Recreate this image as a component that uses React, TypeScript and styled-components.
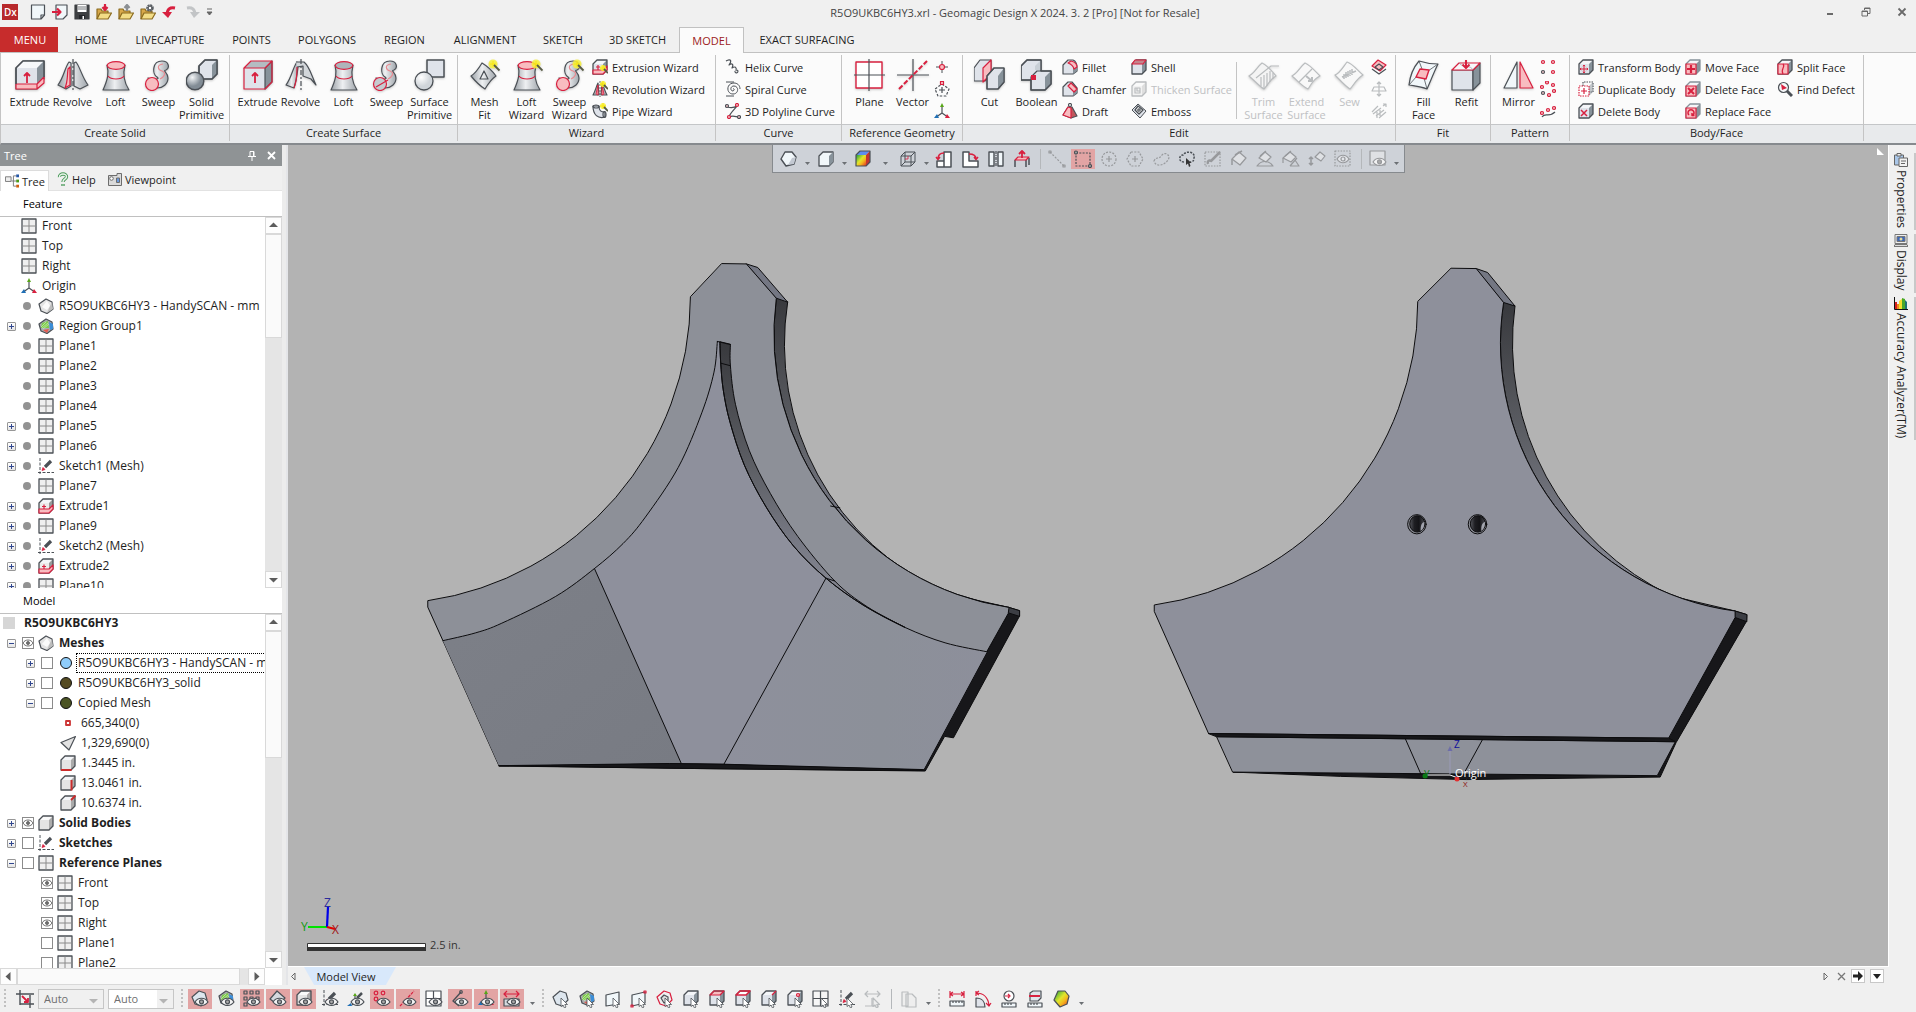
import React, { ReactNode } from "react";
import styled, { createGlobalStyle, css } from "styled-components";

/* ---------- palette ---------- */
const LINE = "#4b5056";
const RED = "#d8203f";
const PINK = "#f8bcc0";
const LIGHT = "#dfe3ea";
const DARK = "#87929a";
const PALE = "#f1f7fa";
const OFF = "#b9bcbe";

const GlobalStyle = createGlobalStyle`
  * { box-sizing: border-box; }
  html, body { margin: 0; height: 100%; }
  #root { height: 100%; }
  body, button, select, input {
    font-family: "Open Sans", "Noto Sans", sans-serif;
    font-size: 11px;
    color: #1e1e1e;
  }
  button { border: 0; background: none; padding: 0; margin: 0; }
  svg { display: block; flex: none; }
`;

/* ---------- icon drawings ---------- */
const B = ({ children }: { children: ReactNode }) => (
  <svg width="32" height="32" viewBox="1 0 32 32" fill="none" stroke={LINE} strokeWidth="1.2" strokeLinejoin="round">
    {children}
  </svg>
);
const S = ({ children, c = LINE }: { children: ReactNode; c?: string }) => (
  <svg width="16" height="16" viewBox="0 0 16 16" fill="none" stroke={c} strokeWidth="1.2" strokeLinejoin="round">
    {children}
  </svg>
);

/* small cube with configurable faces */
const Cube = ({ front = LIGHT, top = "#f4f6f9", side = DARK, line = LINE }: { front?: string; top?: string; side?: string; line?: string }) => (
  <g stroke="none">
    <path d="M1 5L5 1H15L11 5Z" fill={top} />
    <path d="M11 5L15 1V11L11 15Z" fill={side} />
    <path d="M1 5H11V15H1Z" fill={front} />
    <path d="M1 5L5 1H15V11L11 15H1Z" fill="none" stroke={line} strokeWidth="1.3" />
  </g>
);
const Wand = ({ x, y, r = 4.5 }: { x: number; y: number; r?: number }) => (
  <g transform={`translate(${x} ${y})`}>
    <circle cx="0" cy="0" r={r} fill="#f6f03a" stroke="none" opacity=".85" />
    <path d="M0 -3V3M-3 0H3" stroke="#fbe600" strokeWidth=".8" />
    <path d={`M1 1L${r + 2} ${r + 2}`} stroke="#565a44" strokeWidth="1.8" />
  </g>
);
const Plus4 = ({ c = RED }: { c?: string }) => (
  <path d="M6 6V14M2 10H10M5 7.2L6 6L7 7.2M5 12.8L6 14L7 12.8M3.2 9L2 10L3.2 11M8.8 9L10 10L8.8 11" stroke={c} strokeWidth="1" />
);
const SCurve = (
  <>
    <path d="M15 18C10 15 10 2 20 2C27 2 28 9 24 11C20 12 26 13 26 19C26 25 21 29 15 29L6 19C10 21 19 21 15 18Z" fill="url(#gMetal)" />
    <path d="M21 5C14 6 16 11 20 12C25 14 22 18 18 20" stroke="#e88b92" />
  </>
);
const Vase = (top: string) => (
  <>
    <path d="M8 6C10 14 9 20 4 31H30C24 22 24 14 26 6Z" fill="url(#gMetal)" />
    <ellipse cx="17" cy="6.500" rx="8.800" ry="3.800" fill={top} stroke={RED} />
    <path d="M9 17c3 4 13 4 16 0" stroke={RED} />
  </>
);

const big: Record<string, ReactNode> = {
  extrudeSolid: <><path d="M3 9L10 2H31V20L24 30H3Z" fill={LIGHT} /><path d="M3 9L10 2H31L24 9Z" fill="#f6f8fa" stroke="none" /><path d="M24 9L31 2V18L24 25Z" fill={DARK} stroke="none" /><path d="M3 25H24L31 18V24L24 30H3ZM24 25V30" fill={PINK} stroke={RED} /><path d="M3 25V9L10 2H31V18" strokeWidth="1.5" /><path d="M14 24V14M11 17L14 14L17 17" stroke={RED} strokeWidth="1.8" /></>,
  revolveSolid: <><path d="M13 3C9 8 8 18 2 26l8 4 5-3V4ZM20 3C24 8 26 18 32 26l-8 4-6-3V4Z" fill="url(#gMetal)" /><path d="M12 10L14 8V26L9 29C12 22 11 17 12 10Z" fill={PINK} stroke={RED} /><path d="M17 0V32" strokeDasharray="5 2 2 2" /></>,
  loftSolid: Vase(PINK),
  sweepSolid: <>{SCurve}<circle cx="10" cy="25" r="6.500" fill={PINK} stroke={RED} /></>,
  solidPrimitive: <><path d="M14 7L20 1H32V15L27 20H14Z" fill={LIGHT} /><path d="M27 6L32 1V15L27 20Z" fill={DARK} stroke="none" /><path d="M14 7L20 1H32V15L27 20H14Z" strokeWidth="1.5" /><circle cx="10" cy="22" r="8.800" fill="url(#gBall)" strokeWidth="1.5" /></>,
  extrudeSurf: <><path d="M3 9H24V30H3Z" fill={LIGHT} stroke="none" /><path d="M24 9L31 2V23L24 30Z" fill={DARK} /><path d="M3 9L10 2H31L24 9Z" fill="#b4bcc2" stroke={RED} /><path d="M3 9V30H24L31 23V2" stroke={RED} /><path d="M14 24V14M11 17L14 14L17 17" stroke={RED} strokeWidth="1.8" /></>,
  revolveSurf: <><path d="M13 3C9 8 8 18 2 26l8 3C13 20 13 16 14 8Z" fill="url(#gMetal)" /><path d="M12 3H20C26 8 28 18 32 26L27 20 19 17V7L13 8" fill="#d2d6da" /><path d="M13 8C13 16 13 22 10 29" stroke={RED} /><path d="M17 0V32" strokeDasharray="5 2 2 2" /></>,
  loftSurf: Vase("#aeb4ba"),
  sweepSurf: <>{SCurve}<circle cx="10" cy="25" r="6.500" fill="#c6cbd0" stroke={RED} /><path d="M6 28L18 21" stroke={RED} /></>,
  surfacePrimitive: <><path d="M14 1H31V18H14Z" fill={LIGHT} strokeWidth="1.5" /><circle cx="11" cy="22" r="9" fill="url(#gPale)" strokeWidth="1.3" /></>,
  meshFit: <><path d="M3 17C8 14 11 9 14 4C19 7 23 10 28 17C23 20 20 25 17 30C12 27 8 23 3 17Z" fill="url(#gMetal)" /><path d="M16 12L20 20H12Z" /><Wand x={25} y={5} /></>,
  loftWiz: <>{Vase(PINK)}<Wand x={26} y={5} /></>,
  sweepWiz: <>{SCurve}<circle cx="10" cy="25" r="6.500" fill={PINK} stroke={RED} /><Wand x={24} y={5} /></>,
  plane: <><path d="M3 3H29V29H3Z" fill="#fff" stroke={RED} strokeWidth="1.4" /><path d="M16 0V32M0 16H32" strokeWidth="1.2" /></>,
  vector: <><path d="M17 0V32M1 16H33" /><path d="M3 30L31 2" stroke={RED} strokeWidth="2" strokeDasharray="5 2" /></>,
  cut: <><path d="M1 9L7 1H18V15L12 22H1Z" fill={LIGHT} /><path d="M10 9L18 1V15L10 23Z" fill={PINK} stroke={RED} /><path d="M14 17L21 9H31V23L25 30H14Z" fill={LIGHT} /><path d="M25 17L31 9V23L25 30Z" fill={DARK} stroke="none" /><path d="M14 17L21 9H31V23L25 30H14Z" /></>,
  boolean: <><path d="M1 7L7 1H21V14L15 21H1Z" fill={LIGHT} /><path d="M15 7L21 1V11H15Z" fill="#c8cfd6" stroke="none" /><path d="M11 18L17 12H31V25L25 31H11Z" fill={LIGHT} /><path d="M25 18L31 12V25L25 31Z" fill={DARK} stroke="none" /><path d="M11 21H1V7L7 1H21V12H31V25L25 31H11V21" strokeWidth="1.4" /><path d="M11 16H16V21H11Z" fill={RED} stroke="none" /></>,
  trim: <g stroke={OFF}><path d="M2 17C8 14 10 8 15 4C20 6 24 11 29 17C23 20 21 26 17 30C12 27 8 22 2 17Z" fill="#f4f4f4" /><path d="M32 7H24L9 19M14 18V27M17 16V30M20 14V27M23 12V23M26 14V20" /></g>,
  extend: <g stroke={OFF}><path d="M2 17C8 14 10 8 15 4C20 6 24 11 30 17C23 20 21 26 18 30C12 27 8 22 2 17Z" fill="#f8f8f8" /><path d="M9 23L22 10" /><path d="M16 17L22 22M22 18V22H18" strokeWidth="2" /></g>,
  sew: <g stroke={OFF}><path d="M2 16C7 14 10 8 14 3C20 5 24 11 30 16C23 20 21 26 17 30C12 27 8 22 2 16Z" fill="#f8f8f8" /><path d="M11 15V20M13 13V19M15 12V18M17 11V17M19 10V16M9 18L23 12" strokeWidth="1.5" /></g>,
  fillFace: <><path d="M12 2C18 4 24 5 31 5C27 13 24 21 20 30C13 27 8 27 2 26C3 17 6 9 12 2Z" fill={PALE} /><path d="M12 2L15 10M31 5L21 12M20 30L17 19M2 26L10 17" strokeWidth=".8" /><path d="M13 10L22 11L19 20L9 18Z" fill={PINK} stroke={RED} strokeWidth="1.4" /></>,
  refit: <><path d="M2 11H23V31H2Z" fill={LIGHT} /><path d="M23 11L30 4V24L23 31Z" fill={DARK} /><path d="M2 11L9 4H30L23 11Z" fill="#f7f9fb" stroke={RED} /><path d="M9 4C14 10 20 5 23 11" strokeWidth=".6" stroke={DARK} /><path d="M16 1V9M12.500 5.500L16 9L19.500 5.500" stroke={RED} strokeWidth="2" /></>,
  mirror: <><path d="M15 3V29H2Z" fill={PALE} /><path d="M18 3V29H31Z" fill={PINK} stroke={RED} /></>,
};

const dots = (pts: [number, number, string][]) => pts.map(([x, y, c], i) => <circle key={i} cx={x} cy={y} r="1.500" stroke={c} fill="#f4c5c9" />);

const small: Record<string, ReactNode> = {
  extrusionWiz: <><Cube /><path d="M1 11H11L15 7V11L11 15H1Z" fill={PINK} stroke={RED} /><path d="M6 11V6M4 8H8" stroke={RED} /><Wand x={11} y={9} r={3} /></>,
  revolutionWiz: <><path d="M6 2C4 6 3 11 1 14H7ZM10 2C12 6 13 11 15 14H9Z" fill="#b5bcc2" /><path d="M6 4V14L4 13Z" fill={PINK} stroke={RED} strokeWidth=".9" /><path d="M10 5L12 13L10 14Z" fill={PINK} stroke={RED} strokeWidth=".9" /><path d="M8 0V16" strokeDasharray="2 1" strokeWidth=".9" /><Wand x={11} y={3} r={3} /></>,
  pipeWiz: <><path d="M1 3H7C7 8 9 9 13 9V14C6 16 1 12 1 3Z" fill={LIGHT} /><ellipse cx="4" cy="3.500" rx="3" ry="1.500" /><ellipse cx="12.500" cy="11.500" rx="1.500" ry="3" /><Wand x={11} y={3} r={3} /></>,
  helix: <path d="M1 2C6 -1 7 2 4 6C7 4 9 5 7 9C10 7 12 8 11 12M10 12a1.500 1.500 0 1 0 2-1" />,
  spiral: <path d="M8 8c1-1 2 1 0 2-3 0-3-5 1-5 5 0 5 8-1 8-7 0-7-11 1-11 3 0 6 2 6 6M1 1H9M1 15H9" strokeWidth="1" />,
  poly: <><path d="M2 4C6 5 9 5 12 3C10 6 5 10 4 14C8 12 11 14 14 14" />{dots([[2, 3, LINE], [12, 2, RED], [4, 14, RED], [14, 14, LINE]])}</>,
  point: <><path d="M8 2V14M2 8H14" strokeWidth="1" /><circle cx="8" cy="8" r="2.500" fill={PINK} stroke={RED} /></>,
  polygonCenter: <><path d="M8 3L15 8L12 15H4L1 8Z" strokeDasharray="2.500 1.500" /><path d="M8 6V12M5 9H11" /><path d="M6.500 0.500H9.500V3.500H6.500Z" stroke={RED} fill={PINK} /></>,
  axes: <><path d="M8 3V10L3 13.500M8 10L13 13.500" /><path d="M8 0L10 4H6Z" fill="#58a618" stroke="none" /><path d="M0 15L5 15L3 11Z" fill="#1f6fb5" stroke="none" /><path d="M16 15L11 15L13 11Z" fill={RED} stroke="none" /></>,
  fillet: <><path d="M1 6L6 1H11C14 2 15 5 15 9V12L11 15H1Z" fill={LIGHT} /><path d="M11 9L15 7V12L11 15Z" fill={DARK} stroke="none" /><path d="M6 4L9 2C13 3 15 5 15 8L12 10C11 6 9 5 6 4Z" fill={PINK} stroke={RED} /></>,
  chamfer: <><path d="M1 6L6 1H10L15 7V12L11 15H1Z" fill={LIGHT} /><path d="M11 10L15 7V12L11 15Z" fill={DARK} stroke="none" /><path d="M6 5L9 2L15 8L12 11Z" fill={PINK} stroke={RED} /></>,
  draft: <><path d="M6 4L10 4L15 13L9 15L1 12Z" fill="#c0565c" /><path d="M6 4L9 5V15L1 12Z" fill={PINK} stroke={RED} /><circle cx="8" cy="2" r="1.500" /></>,
  shell: <><Cube /><path d="M1 5L4 1H15L12 5Z" fill="#c4848c" stroke={RED} /></>,
  thicken: <g><Cube front="#f2f2f2" top="#fafafa" side="#dedede" line={OFF} /><path d="M4 7H9V12H4ZM6 7V10H9" stroke={OFF} /></g>,
  emboss: <><path d="M1 7L7 1L15 8L9 15Z" fill={LIGHT} strokeWidth="1" /><path d="M7 3L12 7L8 11L4 7Z" fill="#fff" strokeWidth="1.300" /><circle cx="8" cy="7" r="1.200" /></>,
  surfA: <><path d="M1 7L7 1L15 6L9 12Z" fill={PINK} stroke={RED} /><path d="M1 10L8 15L15 10M4 8L8 5L12 8L8 11Z" /></>,
  surfB: <path d="M8 1V15M1 10L3 6H13L15 10ZM6 3L8 1L10 3M6 13L8 15L10 13" stroke={OFF} />,
  surfC: <path d="M1 9L7 3M2 11L10 5M5 13L13 7M8 15L15 9M6 15V9M9 13V7M12 3L15 1M12 1H15V4" stroke={OFF} />,
  pat1: <>{dots([[3, 3, RED], [13, 3, RED], [3, 13, LINE], [13, 13, RED]])}</>,
  pat2: <>{dots([[7, 1.5, RED], [13, 4, RED], [2, 6, RED], [14, 10, RED], [3, 12, LINE], [9, 14, RED]])}</>,
  pat3: <><path d="M2 14C5 9 9 15 15 9" />{dots([[2, 10, RED], [8, 7, RED], [14, 5, RED]])}</>,
  transform: <><Cube /><Plus4 /></>,
  duplicate: <><path d="M5 5V1H15V11H11" strokeDasharray="1.500 1" /><path d="M11 5L15 1V11L11 15Z" fill={DARK} stroke="none" opacity=".5" /><path d="M1 5H11V15H1Z" fill="#fff" stroke={RED} strokeDasharray="1.500 1" /><path d="M6 7V13M3 10H9" stroke={RED} /></>,
  deleteBody: <><Cube /><path d="M3 7L9 13M9 7L3 13" stroke={RED} strokeWidth="1.500" /></>,
  moveFace: <><Cube line={DARK} /><path d="M1 5H11V15H1Z" fill={PINK} stroke={RED} /><path d="M6 6V14M2 10H10" stroke={RED} strokeWidth="2.200" /></>,
  deleteFace: <><Cube line={DARK} /><path d="M1 5H11V15H1Z" fill={PINK} stroke={RED} /><path d="M3 7L9 13M9 7L3 13" stroke={RED} strokeWidth="2" /></>,
  replaceFace: <><Cube line={DARK} /><path d="M1 5H11V15H1Z" fill={PINK} stroke={RED} /><path d="M4 12a3 3 0 1 1 4 0M9.500 12.500L7 12.500V10" stroke={RED} strokeWidth="1.500" /></>,
  splitFace: <><Cube /><path d="M1 5H11V15H1Z" fill={PINK} stroke={RED} /><path d="M6 5C9 8 3 10 6 15" stroke={RED} /></>,
  findDefect: <><path d="M10 10L15 15" strokeWidth="3" /><circle cx="6.500" cy="6.500" r="5" fill="#f4f6f8" /><path d="M4 3L10 7L5 9Z" fill={RED} stroke="none" /></>,
  planeIco: <><path d="M1 1H15V15H1Z" fill="#efefef" strokeWidth="1.300" /><path d="M8 1.500V14.500M1.500 8H14.500" stroke="#8a8a8a" strokeWidth="1" /></>,
  mesh: <><path d="M8 1L14 4L15 11L9 15.500L3 13L1 6Z" fill="#e4e4e4" /><path d="M4 9L9 3L12 8L9 12Z" fill="#fafafa" stroke="none" /><path d="M12 8L14 4L15 11L9 15Z" fill="#bdbdbd" stroke="none" /></>,
  region: <><path d="M8 1L14 4L15 11L9 15.500L3 13L1 6Z" fill="#a9adb0" /><path d="M4 5L10 3L11 10L3 10Z" fill="#7ccb4a" stroke="none" /><path d="M11 4L15 6V11L12 12Z" fill="#3b8ed8" stroke="none" /><path d="M5 12L11 11L9 15Z" fill="#e55a50" stroke="none" /><path d="M3 9L8 4M4 10L10 5M5 11L11 6" stroke="#cdeeb6" strokeWidth=".7" /></>,
  sketch: <><path d="M2 0V16M0 14.500H16" strokeWidth="1" strokeDasharray="3 1.500" /><path d="M7 9L13 3" strokeWidth="3.200" /><path d="M4 12.500L5 9.500L7 11.500Z" fill={RED} stroke={RED} strokeWidth=".8" /></>,
  extrudeTree: <><Cube front="#ececec" side="#9a9a9a" /><path d="M1 11H11L15 7V11L11 15H1Z" fill={PINK} stroke={RED} /><path d="M6 11V6.500M4 8.500H8" stroke={RED} /></>,
  body: <Cube front="#e4e4e4" top="#fafafa" side="#ababab" />,
  vertex: <path d="M6 6H10V10H6Z" stroke="#cc3434" strokeWidth="1.800" fill="#fff" />,
  face: <path d="M1 7.500L15.500 1.500L9 15Z" fill="#e2e2e2" />,
  dimX: <><Cube front="#e4e4e4" side="#ababab" /><path d="M1 15H11.500" stroke="#cc2c2c" strokeWidth="2" /></>,
  dimZ: <><Cube front="#e4e4e4" side="#ababab" /><path d="M11.500 5V15.500" stroke="#cc2c2c" strokeWidth="2" /></>,
  dimY: <><Cube front="#e4e4e4" side="#ababab" /><path d="M11 5L15.500 .5" stroke="#cc2c2c" strokeWidth="2" /></>,
};

const SmallIcon = ({ name }: { name: string }) => <S>{small[name]}</S>;

/* ---------- title bar ---------- */
const Frame = styled.div`
  display: flex;
  flex-direction: column;
  height: 100vh;
  min-width: 1200px;
  background: #f0f0f0;
  overflow: hidden;
`;
const TitleBar = styled.header`
  display: flex;
  height: 27px;
  flex: none;
  align-items: flex-start;
`;
const QuickBar = styled.div`
  display: flex;
  align-items: center;
  gap: 6px;
  padding: 4px 0 0 2px;
`;
const QuickButton = styled.button<{ $gap?: number }>`
  display: flex;
  margin-right: ${(p) => p.$gap ?? 0}px;
`;
const Title = styled.h1`
  flex: 1;
  margin: 0;
  padding-top: 5px;
  font-size: 11px;
  font-weight: 400;
  line-height: 16px;
  text-align: center;
  color: #444;
`;
const WindowButtons = styled.div`
  display: flex;
  gap: 26px;
  padding: 7px 9px 0 8px;
`;
const Glyph = styled.button`
  display: flex;
`;

/* ---------- ribbon tabs ---------- */
const TabRow = styled.nav`
  display: flex;
  height: 26px;
  flex: none;
  border-bottom: 1px solid #c1c1c1;
`;
const MenuButton = styled.button`
  width: 58px;
  margin-right: 2px;
  padding-left: 2px;
  background: #c72c2c;
  color: #fff;
`;
const RibbonTab = styled.button<{ $w: number; $on?: boolean }>`
  width: ${(p) => p.$w}px;
  ${(p) =>
    p.$on &&
    css`
      margin-bottom: -1px;
      border: 1px solid #c1c1c1;
      border-bottom: 0;
      background: #fbfbfb;
      color: #9b1c22;
    `}
`;

/* ---------- ribbon ---------- */
const Ribbon = styled.section`
  display: flex;
  flex: none;
  height: 92px;
  background: linear-gradient(#fbfbfb 71px, #c4c6c8 71px, #c4c6c8 72px, #e8eaec 72px);
  border-left: 1px solid #c4c4c4;
  border-bottom: 2px solid #868a8e;
  padding-top: 2px;
`;
const Group = styled.div<{ $w: number }>`
  display: flex;
  flex-direction: column;
  width: ${(p) => p.$w}px;
  height: 86px;
  border-right: 1px solid #c4c4c4;
`;
const GroupBody = styled.div<{ $pad: number }>`
  display: flex;
  height: 70px;
  padding: 4px 0 0 ${(p) => p.$pad}px;
`;
const GroupLabel = styled.div`
  line-height: 17px;
  text-align: center;
`;
const BigButton = styled.button<{ $w?: number; $off?: boolean }>`
  display: flex;
  flex-direction: column;
  align-items: center;
  width: ${(p) => p.$w ?? 43}px;
  flex: none;
  line-height: 13px;
  white-space: pre;
  color: ${(p) => (p.$off ? "#bfc1c3" : "#1e1e1e")};
  & > svg { margin-bottom: 4px; filter: drop-shadow(0 1px 1px rgba(0, 0, 0, 0.2)); }
`;
const SmallColumn = styled.div<{ $w: number }>`
  display: flex;
  flex-direction: column;
  gap: 6px;
  width: ${(p) => p.$w}px;
  flex: none;
`;
const SmallButton = styled.button<{ $off?: boolean }>`
  display: flex;
  align-items: center;
  gap: 4px;
  height: 16px;
  white-space: nowrap;
  color: ${(p) => (p.$off ? "#bfc1c3" : "#1e1e1e")};
`;
const Rule = styled.div`
  width: 1px;
  height: 57px;
  margin: 3px 5px 0 0;
  background: #c4c4c4;
`;

type BigDef = [string, string, number?, boolean?];
const Bigs = ({ items }: { items: BigDef[] }) => (
  <>
    {items.map(([icon, text, w, off]) => (
      <BigButton key={icon} $w={w} $off={off} disabled={off}>
        <B>{big[icon]}</B>
        {text}
      </BigButton>
    ))}
  </>
);
const Smalls = ({ items, w }: { items: [string, string, boolean?][]; w: number }) => (
  <SmallColumn $w={w}>
    {items.map(([icon, text, off]) => (
      <SmallButton key={icon} $off={off} disabled={off} aria-label={text || icon}>
        <SmallIcon name={icon} />
        {text}
      </SmallButton>
    ))}
  </SmallColumn>
);

/* ---------- main area ---------- */
const Main = styled.main`
  display: flex;
  flex: 1;
  min-height: 0;
`;
const SidePanel = styled.aside`
  display: flex;
  flex-direction: column;
  width: 282px;
  flex: none;
  background: #fff;
`;
const PanelHead = styled.div`
  display: flex;
  align-items: center;
  gap: 11px;
  height: 21px;
  flex: none;
  padding: 0 6px 0 4px;
  background: #8f9395;
  color: #fff;
  & > span { flex: 1; }
`;
const PanelTabs = styled.div`
  display: flex;
  align-items: flex-end;
  height: 25px;
  flex: none;
  background: #f0f0f0;
  border-bottom: 1px solid #e2e2e2;
`;
const PanelTab = styled.button<{ $w: number; $on?: boolean }>`
  display: flex;
  align-items: center;
  gap: 3px;
  width: ${(p) => p.$w}px;
  height: 21px;
  padding-left: 8px;
  ${(p) =>
    p.$on &&
    css`
      height: 21px;
      margin-bottom: -1px;
      background: #fff;
      border: 1px solid #dcdcdc;
      border-bottom: 0;
      padding-left: 4px;
    `}
`;
const SectionHead = styled.h2`
  margin: 0;
  height: 26px;
  flex: none;
  padding-left: 23px;
  border-bottom: 1px solid #c0c0c0;
  font-size: 11px;
  font-weight: 400;
  line-height: 25px;
  color: #000;
`;
const ListArea = styled.div<{ $grow: number }>`
  display: flex;
  flex: ${(p) => p.$grow} 1 0;
  min-height: 0;
`;
const List = styled.ul`
  flex: 1;
  min-width: 0;
  margin: -1px 0 0;
  padding: 0;
  overflow: hidden;
  list-style: none;
`;
const Row = styled.li<{ $indent: number; $bold?: boolean }>`
  display: flex;
  align-items: center;
  height: 20px;
  padding-left: ${(p) => p.$indent}px;
  font-size: 12px;
  font-weight: ${(p) => (p.$bold ? 700 : 400)};
  white-space: nowrap;
  & > * { flex: none; }
`;
const Text = styled.span<{ $focus?: boolean }>`
  margin-left: 4px;
  padding-left: 1px;
  line-height: 18px;
  ${(p) => p.$focus && css`outline: 1px dotted #000;`}
`;
const ExpandCell = styled.span`
  display: flex;
  justify-content: center;
  width: 15px;
`;
const StateCell = styled.span`
  position: relative;
  display: flex;
  width: 19px;
  padding-left: 3px;
  & > svg { position: absolute; top: 1px; left: 4px; pointer-events: none; }
`;
const ExpandButton = styled.button`
  display: flex;
  align-items: center;
  justify-content: center;
  width: 9px;
  height: 9px;
  border: 1px solid #979797;
  border-radius: 1px;
  background: linear-gradient(#fff, #e4e4e4);
`;
const Check = styled.input`
  appearance: none;
  width: 12px;
  height: 12px;
  margin: 0;
  border: 1px solid #8b8b8b;
  background: #fff;
`;
const Bullet = styled.i`
  width: 8px;
  height: 8px;
  margin-left: 1px;
  border-radius: 4px;
  background: #929292;
`;
const ColorDot = styled.i<{ $c: string }>`
  width: 12px;
  height: 12px;
  margin: 0 1px 0 3px;
  border: 1px solid #111;
  border-radius: 6px;
  background: ${(p) => p.$c};
`;
const RootSquare = styled.i`
  width: 12px;
  height: 12px;
  margin-right: 4px;
  background: #d6d6d6;
`;
const Scroll = styled.div<{ $row?: boolean }>`
  display: flex;
  flex-direction: ${(p) => (p.$row ? "row" : "column")};
  flex: ${(p) => (p.$row ? "1" : "none")};
  ${(p) => (p.$row ? "height" : "width")}: 17px;
  background: #e5e5e5;
`;
const ScrollEnd = styled.button`
  display: flex;
  align-items: center;
  justify-content: center;
  width: 17px;
  height: 17px;
  flex: none;
  border: 1px solid #d9d9d9;
  background: #fdfdfd;
`;
const Thumb = styled.div<{ $pct: number }>`
  flex: 0 0 ${(p) => p.$pct}%;
  border: 1px solid #d9d9d9;
  background: #fafafa;
`;
const Spacer = styled.div`
  flex: 1;
`;
const BottomScroll = styled.div`
  display: flex;
  flex: none;
  padding-right: 17px;
`;
const Splitter = styled.div`
  width: 6px;
  flex: none;
  background: #ececec;
  border-right: 2px solid #e4e5e8;
`;

const Expand = ({ open, name }: { open?: boolean; name: string }) => (
  <ExpandButton aria-label={(open ? "Collapse " : "Expand ") + name}>
    <svg width="7" height="7" viewBox="0 0 7 7" stroke="#31478f" strokeWidth="1">
      <path d={open ? "M1 3.500H6" : "M1 3.500H6M3.500 1V6"} />
    </svg>
  </ExpandButton>
);
const EyeCheck = ({ on, name }: { on?: boolean; name: string }) => (
  <>
    <Check type="checkbox" aria-label={"Show " + name} defaultChecked={on} />
    {on && (
      <svg width="10" height="10" viewBox="0 0 10 10" fill="none" stroke="#6c6c6c">
        <path d="M0 5C2 1 8 1 10 5C8 9 2 9 0 5Z" />
        <circle cx="5" cy="5" r="1.500" fill="#6c6c6c" />
      </svg>
    )}
  </>
);

type Feature = [string, string, boolean?, boolean?];
const features: Feature[] = [
  ["planeIco", "Front", true], ["planeIco", "Top", true], ["planeIco", "Right", true], ["axes", "Origin", true],
  ["mesh", "R5O9UKBC6HY3 - HandySCAN - mm"], ["region", "Region Group1", false, true],
  ["planeIco", "Plane1"], ["planeIco", "Plane2"], ["planeIco", "Plane3"], ["planeIco", "Plane4"],
  ["planeIco", "Plane5", false, true], ["planeIco", "Plane6", false, true], ["sketch", "Sketch1 (Mesh)", false, true],
  ["planeIco", "Plane7"], ["extrudeTree", "Extrude1", false, true], ["planeIco", "Plane9", false, true],
  ["sketch", "Sketch2 (Mesh)", false, true], ["extrudeTree", "Extrude2", false, true], ["planeIco", "Plane10", false, true],
];

interface Node { text: string; level: number; icon?: string; dot?: string; exp?: "+" | "-"; state?: "on" | "off"; bold?: boolean; focus?: boolean; }
const nodes: Node[] = [
  { text: "Meshes", level: 0, icon: "mesh", exp: "-", state: "on", bold: true },
  { text: "R5O9UKBC6HY3 - HandySCAN - mm", level: 1, dot: "#8fcdfb", exp: "+", state: "off", focus: true },
  { text: "R5O9UKBC6HY3_solid", level: 1, dot: "#554b22", exp: "+", state: "off" },
  { text: "Copied Mesh", level: 1, dot: "#4b5424", exp: "-", state: "off" },
  { text: "665,340(0)", level: 1, icon: "vertex" },
  { text: "1,329,690(0)", level: 1, icon: "face" },
  { text: "1.3445 in.", level: 1, icon: "dimX" },
  { text: "13.0461 in.", level: 1, icon: "dimZ" },
  { text: "10.6374 in.", level: 1, icon: "dimY" },
  { text: "Solid Bodies", level: 0, icon: "body", exp: "+", state: "on", bold: true },
  { text: "Sketches", level: 0, icon: "sketch", exp: "+", state: "off", bold: true },
  { text: "Reference Planes", level: 0, icon: "planeIco", exp: "-", state: "off", bold: true },
  { text: "Front", level: 1, icon: "planeIco", state: "on" },
  { text: "Top", level: 1, icon: "planeIco", state: "on" },
  { text: "Right", level: 1, icon: "planeIco", state: "on" },
  { text: "Plane1", level: 1, icon: "planeIco", state: "off" },
  { text: "Plane2", level: 1, icon: "planeIco", state: "off" },
];

const Arrow = ({ dir, c = "#5c5c5c" }: { dir: "u" | "d" | "l" | "r"; c?: string }) => {
  const d = { u: "M0 6L4.500 1.500L9 6Z", d: "M0 3L4.500 7.500L9 3Z", l: "M6.500 0L1.500 4.500L6.500 9Z", r: "M2.500 0L7.500 4.500L2.500 9Z" }[dir];
  return <svg width="9" height="9" viewBox="0 0 9 9"><path d={d} fill={c} /></svg>;
};
const VScroll = ({ pct }: { pct: number }) => (
  <Scroll>
    <ScrollEnd aria-label="Scroll up"><Arrow dir="u" /></ScrollEnd>
    <Thumb $pct={pct} />
    <Spacer />
    <ScrollEnd aria-label="Scroll down"><Arrow dir="d" /></ScrollEnd>
  </Scroll>
);

/* ---------- viewport ---------- */
const Stage = styled.section`
  display: flex;
  flex-direction: column;
  flex: 1;
  min-width: 0;
`;
const Canvas = styled.div`
  position: relative;
  flex: 1;
  min-height: 0;
  background: #b3b3b3;
  overflow: hidden;
  border-right: 1px solid #fff;
  & > svg { width: 100%; height: 100%; }
  & > svg .solid path, & > svg .solid ellipse { vector-effect: non-scaling-stroke; }
`;
const FloatBar = styled.div`
  position: absolute;
  top: 0;
  left: 484px;
  display: flex;
  align-items: center;
  height: 28px;
  padding: 0 1px 0 3px;
  background: #ced2d8;
  border: 1px solid #868a8e;
  border-top: 0;
`;
const ToolButton = styled.button<{ $on?: boolean; $w?: number }>`
  display: flex;
  align-items: center;
  justify-content: center;
  width: ${(p) => p.$w ?? 24}px;
  height: 20px;
  margin-right: ${(p) => (p.$w ? 0 : 2)}px;
  flex: none;
  background: ${(p) => (p.$on ? "#e2a4a4" : "transparent")};
`;
const ToolRule = styled.i`
  width: 1px;
  height: 20px;
  margin: 0 4px;
  background: #b4b7ba;
`;
const ViewTabs = styled.div`
  display: flex;
  align-items: center;
  height: 19px;
  flex: none;
  border-top: 1px solid #fff;
  gap: 7px;
  padding: 0 5px 0 2px;
`;
const ViewTab = styled.button`
  width: 92px;
  height: 18px;
  padding-right: 8px;
  background: #d8e8fb;
  clip-path: polygon(0 0, 100% 0, 89% 100%, 11% 100%);
`;
const BoxButton = styled.button`
  display: flex;
  align-items: center;
  justify-content: center;
  width: 14px;
  height: 14px;
  margin-left: -2px;
  border: 1px solid #c8c8c8;
  background: #fff;
`;
const Dock = styled.aside`
  display: flex;
  flex-direction: column;
  gap: 4px;
  width: 27px;
  flex: none;
  padding-top: 8px;
`;
const DockTab = styled.button`
  display: flex;
  align-items: center;
  gap: 3px;
  width: 27px;
  padding: 0 2px 2px 0;
  border-right: 2px solid #c8c8c8;
  writing-mode: vertical-rl;
  font-size: 12px;
  line-height: 16px;
`;

/* ---------- status bar ---------- */
const StatusBar = styled.footer`
  display: flex;
  align-items: center;
  height: 27px;
  flex: none;
  padding-left: 1px;
`;
const Grip = styled.i`
  width: 2px;
  height: 20px;
  margin: 0 5px 0 3px;
  background: repeating-linear-gradient(#c0c0c0 0 2px, transparent 2px 4px);
`;
const SelectWrap = styled.span`
  position: relative;
  display: flex;
  margin-right: 4px;
  & > svg { position: absolute; right: 6px; top: 7px; }
`;
const Combo = styled.select<{ $edit?: boolean }>`
  appearance: none;
  width: 66px;
  height: 20px;
  padding: 0 5px;
  border: 1px solid #c6c6c6;
  border-radius: 0;
  color: #6f6f6f;
  opacity: 1;
  background: ${(p) => (p.$edit ? "linear-gradient(90deg, #fff 48px, #f0f0f0 48px)" : "#f0f0f0")};
`;

/* smooth curve through a list of points */
const through = (p: number[][], move = true) => {
  let d = move ? `M${p[0]}` : `L${p[0]}`;
  for (let i = 0; i < p.length - 1; i++) {
    const a = p[i - 1] ?? p[i], b = p[i], c = p[i + 1], e = p[i + 2] ?? c;
    d += `C${b[0] + (c[0] - a[0]) / 6},${b[1] + (c[1] - a[1]) / 6} ${c[0] - (e[0] - b[0]) / 6},${c[1] - (e[1] - b[1]) / 6} ${c}`;
  }
  return d;
};
const rev = (p: number[][]) => [...p].reverse();

const grooveL = [[754, 284], [746, 370], [717, 484], [661, 637], [583, 776], [530, 850], [462, 920], [370, 998], [242, 1073], [180, 1100], [102, 1122]];
const grooveIn = [[760, 286], [762, 345], [768, 420], [784, 510], [818, 630], [870, 748], [935, 857], [1012, 947], [1100, 1022], [1200, 1085], [1295, 1128], [1394, 1153]];
const grooveOut = [[785, 293], [785, 352], [797, 460], [830, 590], [880, 710], [945, 830], [1033, 955], [1110, 1027], [1200, 1085]];

const Model = () => (
  <svg viewBox="288 145 1600 821" preserveAspectRatio="xMidYMid slice" role="img" aria-label="Model view">
    <g className="solid" transform="translate(400 240) scale(.4209 .3571)" stroke="#0c0c0e" strokeLinejoin="round" strokeLinecap="round">
      <g>
        <path d="M1447 1029L1472 1038V1053L1315 1394L1294 1390L1248 1487L700 1480L235 1473L640 1465L770 1467L1244 1482L1394 1153L1445 1046Z" fill="#17171a" />
        <path d="M1447 1029L1472 1038V1054L1445 1044Z" fill="#3c3e44" />
        <path d="M894 163A656 773 0 0 0 1447 1029L1300 990A646 762 0 0 1 921 174Z" fill="url(#gEdge)" />
        <path d="M823 67L850 77L921 174L894 163Z" fill="#747783" />
        <path d="M765 66L823 67L894 163A656 773 0 0 0 1447 1029L1445 1046L1394 1153L1244 1482L770 1467L640 1465L235 1472L102 1122L66 1028V1010A729 860 0 0 0 690 160Z" fill="#8d9098" />
        <path d={"M754 284L760 286" + through(grooveIn, false) + "L1244 1482L770 1467L668 1465L462 920" + through(rev(grooveL.slice(0, 7)), false) + "Z"} fill="#8e909c" stroke="none" />
        <path d={through(grooveIn.slice(7)) + "L1244 1482L770 1467Z"} fill="url(#gLower)" stroke="none" />
        <path d={through(grooveL.slice(6)) + "L235 1472L668 1465Z"} fill="url(#gShade)" stroke="none" />
        <path d={through(grooveIn.slice(0, 10)) + through(rev(grooveOut), false) + "Z"} fill="url(#gEdge)" />
        <path d={through(grooveL) + through(grooveIn)} fill="none" />
        <path d="M754 284L785 293M762 345L785 352M462 920L668 1465M1012 947L770 1467M1023 745L1045 750M1012 947L1033 955" fill="none" />
        <path d="M235 1472L640 1466L770 1468L1244 1483L1246 1486L700 1480Z" fill="#17171a" />
      </g>
      <g transform="translate(1734 0)">
        <path d="M1438 1039L1466 1049L1465 1068L1298 1407L1260 1504L800 1511L500 1502L245 1490L1253 1500L1296 1405L1280 1395L1438 1057Z" fill="#17171a" />
        <path d="M1438 1039L1466 1049V1069L1438 1057Z" fill="#3c3e44" />
        <path d="M888 175A641 755 0 0 0 1438 1039L1290 998A665 783 0 0 1 915 185Z" fill="url(#gEdge)" />
        <path d="M823 80L850 91L915 185L888 175Z" fill="#747783" />
        <path d="M764 79L823 80L888 175A641 755 0 0 0 1438 1039V1057L1280 1395L187 1382L58 1040V1022A727 857 0 0 0 684 173Z" fill="#8e909b" />
        <path d="M207 1391L1296 1405L1253 1500L245 1490Z" fill="#8e919a" />
        <path d="M187 1382L1280 1395L1296 1405L207 1391Z" fill="#17171a" />
        <path d="M655 1398L692 1497M837 1401L797 1487" />
        {[682, 826].map((x) => (
          <g key={x}>
            <ellipse cx={x} cy="796" rx="22" ry="27" fill="#8a8c94" />
            <ellipse cx={x + 1} cy="795" rx="18" ry="23" fill="url(#gHole)" />
            <path d={`M${x + 9} 815C${x + 8} 800 ${x + 12} 790 ${x + 18} 790C${x + 18} 802 ${x + 15} 810 ${x + 9} 815Z`} fill="#a2a4ae" stroke="none" />
          </g>
        ))}
      </g>
    </g>
    <g fontSize="12">
      <path d="M1450 774V751" stroke="#9a9ab8" />
      <path d="M1450 746L1452.500 751H1447.500Z" fill="#6d6da8" />
      <path d="M1427 775H1450L1458 778" stroke="#fff" fill="none" />
      <circle cx="1425" cy="776" r="2.500" fill="#0a7a14" />
      <circle cx="1457" cy="779" r="2.500" fill="#e03030" />
      <text x="1454" y="748" fontSize="10" fill="#10109a">Z</text>
      <text x="1424" y="778" fontSize="10" fill="#0a7a14">Y</text>
      <text x="1463" y="787" fontSize="8" fill="#8c1010">X</text>
      <text x="1455" y="777" fontSize="11" fill="#fff">Origin</text>
      <path d="M308 927H327" stroke="#00e400" strokeWidth="2" />
      <path d="M328 907L327 927" stroke="#0000e8" strokeWidth="2.200" />
      <path d="M327 927L335 929" stroke="#e00000" strokeWidth="2" />
      <text x="324" y="907" fill="#2b2b9c">Z</text>
      <text x="301" y="931" fill="#109a10">Y</text>
      <text x="332" y="934" fill="#a01616">X</text>
      <path d="M307.500 943.500H425.500V950.500H307.500Z" fill="#fff" stroke="#333" />
      <path d="M307 947H426V951H307Z" fill="#333" />
      <text x="430" y="949" fill="#333" fontSize="11">2.5 in.</text>
      <path d="M1877 148V155H1884Z" fill="#fff" />
    </g>
  </svg>
);

/* ---------- toolbar drawings ---------- */
const Eye = ({ c = LINE }: { c?: string }) => (
  <g>
    <path d="M4 12C7 7 14 7 17 12C14 16.500 7 16.500 4 12Z" fill="#f4f4f4" stroke={c} />
    <circle cx="10.500" cy="11.800" r="2" fill="#aaa" stroke={c} />
  </g>
);
const Cursor = () => <path d="M9 8V16.500L11 15L12.500 18L14 17L12.800 14.500H15.500Z" fill="#fff" stroke={LINE} strokeWidth=".8" />;
const T = ({ children, c = LINE }: { children: ReactNode; c?: string }) => (
  <svg width="18" height="18" viewBox="0 0 18 18" fill="none" stroke={c} strokeWidth="1.2" strokeLinejoin="round">{children}</svg>
);
const inset = (n: string) => <g transform="translate(1 0)">{small[n]}</g>;
const G = "#97999c";
const meshBlue = <path d="M8 1L14 3L16 10L10 16L4 14L1 7Z" fill="#dde6ee" />;

const floatTools: { name: string; d: ReactNode; c?: string; on?: boolean; w?: number; rule?: boolean }[] = [
  { name: "Shading", w: 26, d: <><path d="M5 2H12L16 7L14 14L6 16L1 9Z" fill={PALE} strokeWidth="1.400" /><path d="M12 8L16 7L14 14L8 15Z" fill="#c3c9d2" stroke="none" /></> },
  { name: "Shading list", w: 11, d: "arrow" },
  { name: "Box view", w: 26, d: <><path d="M2 6L6 2H16V12L12 16H2Z" fill={PALE} strokeWidth="1.300" /><path d="M12 6L16 2V12L12 16Z" fill={DARK} stroke="none" /></> },
  { name: "Box view list", w: 11, d: "arrow" },
  { name: "Color map", w: 26, d: <><path d="M2 5H12V16H2Z" fill="url(#gRain)" stroke="none" /><path d="M2 5L6 1H16L12 5Z" fill="#5d8ef0" stroke="none" /><path d="M12 5L16 1V12L12 16Z" fill="#c5362e" stroke="none" /><path d="M2 5L6 1H16V12L12 16H2Z" /></> },
  { name: "Color map list", w: 19, d: "arrow" },
  { name: "View cube", w: 26, d: <><path d="M2 6H12V16H2ZM6 2H16V12M2 6L6 2M12 6L16 2M12 16L16 12M6 2V12H16M2 16L6 12" strokeWidth="1" /><path d="M6 9H9V6" stroke={RED} strokeWidth=".8" /></> },
  { name: "View cube list", w: 11, d: "arrow" },
  { name: "Rotate left", d: <><path d="M2 11H9V17H2ZM9 2H16V17H9Z" fill="#fff" strokeWidth="1.500" /><path d="M9 3C4 3 3 6 3 9M1 7L3 9.500L5 7" stroke={RED} strokeWidth="1.500" /></> },
  { name: "Rotate right", d: <><path d="M2 2H8V11H17V17H2Z" fill="#fff" strokeWidth="1.500" /><path d="M8 4C13 4 15 6 15 9M13 7L15 9.500L17 7" stroke={RED} strokeWidth="1.500" /></> },
  { name: "Flip", d: <><path d="M2 2H7V16H2ZM11 2H16V16H11Z" fill={PALE} strokeWidth="1.400" /><path d="M9 1V17" strokeDasharray="3 1 1 1" /></> },
  { name: "Normal to", rule: true, d: <><path d="M2 10V17M13 17V10M16 15V8" strokeWidth="1.500" /><path d="M2 10L5 7H16L13 10Z" fill={PINK} stroke={RED} /><path d="M9 8V1M6 4L9 1L12 4" stroke={RED} strokeWidth="1.800" /></> },
  { name: "Line select", c: G, d: <><path d="M2 2L16 16" strokeDasharray="2 1.500" /><path d="M1 1H3V3H1ZM15 15H17V17H15Z" /></> },
  { name: "Rectangle select", on: true, d: <><path d="M2 3H16V16H2Z" strokeDasharray="2 1.300" /><circle cx="2" cy="2.500" r="1.500" fill="#aaa" /><circle cx="16" cy="16" r="1.500" fill="#aaa" /></> },
  { name: "Circle select", c: G, d: <><circle cx="9" cy="9" r="7" strokeDasharray="2 1.300" /><path d="M9 6V12M6 9H12" /></> },
  { name: "Polygon select", c: G, d: <><path d="M5 2H13L17 9L13 16H5L1 9Z" strokeDasharray="2 1.300" /><path d="M9 6V12M6 9H12" /></> },
  { name: "Freehand select", c: G, d: <path d="M2 11C4 6 7 10 10 5C14 1 19 6 16 10C13 15 4 18 2 11Z" strokeDasharray="2 1.300" /> },
  { name: "Lasso select", d: <><path d="M6 12C0 12 1 5 5 5C8 0 18 2 16 8C16 12 13 12 12 12" strokeDasharray="2 1.200" strokeWidth="1.500" /><path d="M8 8V15L10 13.500L11 17L12.500 16L11.500 13H13.500Z" fill="#333" stroke="none" /></> },
  { name: "Brush select", c: G, d: <><path d="M1 2H16V16H1Z" strokeDasharray="1.500 1.300" /><path d="M4 14C3 11 5 10 7 11L16 2" strokeWidth="2.500" /></> },
  { name: "Flood select", c: G, d: <><path d="M2 9L9 2L16 8L10 15Z" fill="#dfe1e4" /><path d="M5 5L12 1M2 9V15" strokeWidth="1.500" /></> },
  { name: "Tangent select", c: G, d: <><path d="M3 8L9 2L15 7L10 12Z" fill="#dfe1e4" /><path d="M1 16C5 10 13 10 17 16ZM4 6L10 1" /></> },
  { name: "Angle select", c: G, d: <><path d="M1 8L8 2L14 7L9 12Z" fill="#dfe1e4" /><path d="M1 8V13M3 6L9 1M8 16H17L13 10M8 16L15 8" /></> },
  { name: "Distance select", c: G, d: <><path d="M7 7L12 2L17 6L13 11Z" fill="#dfe1e4" /><path d="M3 7V15M1 9L3 7L5 9M1 13L3 15L5 13" strokeWidth="1.500" /></> },
  { name: "Visible only", rule: true, c: G, d: <><path d="M1 1H16V16H1Z" strokeDasharray="1.500 1.300" /><path d="M3 9C6 4 12 4 15 9C12 14 6 14 3 9Z" fill="#e4e6ea" /><circle cx="9" cy="9" r="2" /></> },
  { name: "View filter", w: 24, c: G, d: <><path d="M1 1H16V15H1Z" fill="#dfe1e4" /><Eye c={G} /></> },
  { name: "View filter list", w: 13, d: "arrow" },
];

type Tool = [string, ReactNode, boolean?];
const showTools: Tool[] = [
  ["Mesh", <>{meshBlue}<Eye /></>, true],
  ["Region", <>{inset("region")}<Eye /></>],
  ["Point cloud", <><path d="M1 1H4V4H1ZM7 1H10V4H7ZM13 1H16V4H13ZM1 7H4V10H1ZM7 7H10V10H7ZM13 7H16V10H13ZM1 13H4V16H1Z" /><Eye /></>, true],
  ["Surface body", <><path d="M1 9L8 1L16 8L9 15Z" fill="#d5d9de" /><Eye /></>, true],
  ["Solid body", <>{inset("body")}<Eye /></>, true],
  ["Sketch", <>{inset("sketch")}<Eye /></>],
  ["3D sketch", <><path d="M5 15L8 12V5" /><path d="M8 3L10 6H6Z" fill="#58a618" stroke="none" /><path d="M0 16H5L4 13Z" fill="#1f6fb5" stroke="none" /><path d="M10 8L15 3" strokeWidth="2.500" /><Eye /></>],
  ["Reference point", <><g stroke={RED}><circle cx="3" cy="3" r="1.800" /><circle cx="10" cy="3" r="1.800" /><circle cx="3" cy="9" r="1.800" /></g><Eye /></>, true],
  ["Reference vector", <><path d="M1 16L15 1" stroke={RED} strokeDasharray="3 1" /><Eye /></>, true],
  ["Reference plane", <><path d="M1 1H16V16H1ZM8.500 1V16M1 8.500H16" fill="#fff" /><Eye /></>],
  ["Polyline", <><path d="M10 2L2 11L8 16" strokeWidth="1.400" /><circle cx="10" cy="2" r="1.300" /><Eye /></>, true],
  ["Coordinate", <>{inset("axes")}<Eye /></>, true],
  ["Measurement", <><path d="M1 4H16M4 1L1 4L4 7M13 1L16 4L13 7" stroke={RED} /><path d="M1 9H16V16H1Z" fill="#d5d9de" /><Eye /></>, true],
];
const selectTools: Tool[] = [
  ["Select mesh", <>{meshBlue}<Cursor /></>],
  ["Select region", <>{inset("region")}<Cursor /></>],
  ["Select face", <><path d="M2 5L15 2V14L2 16Z" fill={PALE} /><Cursor /></>],
  ["Select edge vertex", <><path d="M2 5L15 2V13L2 16Z" fill={PALE} /><path d="M14 1H16V3H14ZM1 15H3V17H1Z" stroke={RED} /><Cursor /></>],
  ["Select boundary", <><path d="M8 1L14 3L16 10L10 16L4 14L1 7Z" stroke={RED} /><path d="M8 5L12 7L12 11L8 13L5 8Z" fill="#ddd" /><Cursor /></>],
  ["Select body", <><g transform="translate(1 0)"><Cube /></g><Cursor /></>],
  ["Select top face", <><g transform="translate(1 0)"><Cube top={PINK} /></g><path d="M2 5L6 1H16L12 5Z" stroke={RED} /><Cursor /></>],
  ["Select loop", <><g transform="translate(1 0)"><Cube top="#fff" /></g><path d="M2 5L6 1H16L12 5Z" stroke={RED} strokeWidth="1.500" /><Cursor /></>],
  ["Select edge", <><g transform="translate(1 0)"><Cube /></g><path d="M12 5L16 1" stroke={RED} /><Cursor /></>],
  ["Select vertex", <><g transform="translate(1 0)"><Cube /></g><circle cx="12" cy="5" r="1.500" stroke={RED} fill={PINK} /><Cursor /></>],
  ["Select plane", <><path d="M1 1H16V16H1ZM8.500 1V16M1 8.500H16" fill="#f6f6f6" /><Cursor /></>],
  ["Select sketch", <>{inset("sketch")}<Cursor /></>],
  ["Select dimension", <g stroke={OFF}><path d="M1 4H16M4 1L1 4L4 7M13 1L16 4L13 7M1 16H15M8 8V16" /><path d="M9 8V16.500L11 15L12.500 18L14 17L12.800 14.500H15.500Z" fill="#eee" /></g>],
];
const measureTools: Tool[] = [
  ["Distance", <><path d="M2 1V8M16 1V8M2 4H16M5 2L2 4L5 6M13 2L16 4L13 6" stroke={RED} /><path d="M2 11H16V16H2ZM5 11V13M8 11V13M11 11V13M14 11V13" fill={PALE} /></>],
  ["Angle", <><path d="M2 1V6M2 3C10 3 14 8 15 15M12 13L15 16L17 13M5 1L2 3L5 5" stroke={RED} /><path d="M2 8C8 8 11 12 11 17H2Z" fill={LIGHT} /></>],
  ["Radius", <><circle cx="9" cy="6" r="5" fill="#fff" /><path d="M5 6H9M8 4L10 6L8 8" stroke={RED} /><path d="M2 13H16V17H2ZM5 13V15M8 13V15M11 13V15" fill={PALE} /></>],
  ["Section", <><path d="M4 3L7 1H15V8L12 11H4Z" fill={LIGHT} /><path d="M3 6H14" stroke={RED} strokeWidth="2" /><path d="M2 13H16V17H2ZM5 13V15M8 13V15M11 13V15" fill={PALE} /></>],
];

const Drop = ({ c = "#6c7074" }: { c?: string }) => <svg width="7" height="18" viewBox="0 0 7 18"><path d="M1 12H6L3.500 15Z" fill={c} /></svg>;
const Tools = ({ items }: { items: Tool[] }) => (
  <>{items.map(([name, d, on]) => <ToolButton key={name} $on={on} aria-label={name}><T>{d}</T></ToolButton>)}</>
);

const Folder = ({ children }: { children: ReactNode }) => (
  <S c="#8a6a1e"><path d="M1 15V5H5L6 7H12V9" fill="#d8a84a" /><path d="M1 15L4 9H15.500L12 15Z" fill="#f3dd86" />{children}</S>
);

const tabs: [string, number][] = [["HOME", 62], ["LIVECAPTURE", 96], ["POINTS", 67], ["POLYGONS", 84], ["REGION", 71], ["ALIGNMENT", 90], ["SKETCH", 66], ["3D SKETCH", 83], ["MODEL", 65], ["EXACT SURFACING", 126]];

export default function App() {
  return (
    <Frame>
      <GlobalStyle />
      <svg width="0" height="0" aria-hidden="true">
        <defs>
          <linearGradient id="gMetal"><stop offset="0" stopColor="#9ba1a7" /><stop offset=".45" stopColor="#eef0f2" /><stop offset="1" stopColor="#9fa5ab" /></linearGradient>
          <radialGradient id="gBall" cx=".35" cy=".3"><stop offset="0" stopColor="#f4f6f8" /><stop offset="1" stopColor="#828c95" /></radialGradient>
          <radialGradient id="gPale" cx=".35" cy=".3"><stop offset="0" stopColor="#fff" /><stop offset="1" stopColor="#d0d5da" /></radialGradient>
          <linearGradient id="gEdge" x2="0" y2="1"><stop offset="0" stopColor="#38393d" /><stop offset=".45" stopColor="#5e6066" /><stop offset=".7" stopColor="#777984" /><stop offset="1" stopColor="#8d8f99" /></linearGradient>
          <linearGradient id="gShade" x2="1" y2="1"><stop offset="0" stopColor="#7d8088" /><stop offset="1" stopColor="#787b83" /></linearGradient>
          <linearGradient id="gLower"><stop offset="0" stopColor="#8e909c" /><stop offset=".6" stopColor="#8c9099" /><stop offset="1" stopColor="#8d8f9b" /></linearGradient>
          <linearGradient id="gHole"><stop offset="0" stopColor="#55565c" /><stop offset=".3" stopColor="#1e1e22" /><stop offset=".6" stopColor="#141417" /><stop offset="1" stopColor="#4c4d55" /></linearGradient>
          <linearGradient id="gRain" x2="1" y2="1"><stop offset=".1" stopColor="#3fae3c" /><stop offset=".45" stopColor="#e0e62c" /><stop offset=".65" stopColor="#f4b81e" /><stop offset="1" stopColor="#e2321f" /></linearGradient>
        </defs>
      </svg>

      <TitleBar>
        <QuickBar>
          <QuickButton $gap={6} aria-label="Application">
            <svg width="16" height="16" viewBox="0 0 16 16"><rect width="16" height="16" fill="#b7282b" /><text x="2" y="12" fontSize="10" fontWeight="600" fill="#fff">Dx</text></svg>
          </QuickButton>
          <QuickButton aria-label="New"><S><path d="M1.500 1H14.500V11L11 15H1.500Z" fill={PALE} /><path d="M14.500 11H11V15" /></S></QuickButton>
          <QuickButton aria-label="Import"><S><path d="M4 1H15V11L11 15H4Z" fill={PALE} /><path d="M0 8H8M5 4.500L8.500 8L5 11.500" stroke={RED} strokeWidth="2.200" /></S></QuickButton>
          <QuickButton aria-label="Save"><S><path d="M1 1H15V15H1Z" fill="#3d3f42" stroke="#3d3f42" /><path d="M3.500 1H12.500V8H3.500Z" fill="#fff" stroke="none" /><path d="M4 3H12M4 5H12" strokeWidth=".8" /><path d="M5 11H11V15H5Z" fill="#24262a" stroke="none" /><path d="M8.500 12H10V15H8.500Z" fill="#fff" stroke="none" /></S></QuickButton>
          <QuickButton aria-label="Open"><Folder><path d="M9 0V4M6.500 3L9 6L11.500 3" stroke={RED} strokeWidth="2.200" /></Folder></QuickButton>
          <QuickButton aria-label="Export"><Folder><path d="M9 7V3M6.500 4L9 1L11.500 4" stroke="#8b8f93" strokeWidth="2.200" /></Folder></QuickButton>
          <QuickButton aria-label="Settings"><Folder><circle cx="10" cy="4" r="2.800" stroke="#5a5f64" strokeWidth="2" strokeDasharray="2 .6" /><circle cx="10" cy="4" r="1.800" stroke="#5a5f64" fill="#fff" /></Folder></QuickButton>
          <QuickButton aria-label="Undo"><S><path d="M5 11C5 5 8 3 13 4" stroke={RED} strokeWidth="3" /><path d="M0 8H10L6 14Z" fill={RED} stroke="none" /></S></QuickButton>
          <QuickButton aria-label="Redo"><S><path d="M11 11C11 5 8 3 3 4" stroke="#c2c4c6" strokeWidth="3" /><path d="M6 8H16L10 14Z" fill="#c2c4c6" stroke="none" /></S></QuickButton>
          <QuickButton aria-label="Customize"><svg width="7" height="8" viewBox="0 0 7 8"><path d="M1 1H6M1 4H6L3.500 7Z" fill="#666" stroke="#666" /></svg></QuickButton>
        </QuickBar>
        <Title>R5O9UKBC6HY3.xrl - Geomagic Design X 2024. 3. 2 [Pro] [Not for Resale]</Title>
        <WindowButtons>
          <Glyph aria-label="Minimize"><svg width="10" height="10" viewBox="0 0 10 10"><path d="M2 7H8" stroke="#6a6a6a" strokeWidth="2" /></svg></Glyph>
          <Glyph aria-label="Restore"><svg width="10" height="10" viewBox="0 0 10 10" fill="none" stroke="#6a6a6a"><path d="M3.500 3V1H9V6.500H7M3.500 1.500H9" /><path d="M1 4H6.500V9H1ZM1 4.500H6.500" /></svg></Glyph>
          <Glyph aria-label="Close"><svg width="10" height="10" viewBox="0 0 10 10"><path d="M1.500 1.500L8.500 8.500M8.500 1.500L1.500 8.500" stroke="#6a6a6a" strokeWidth="1.800" /></svg></Glyph>
        </WindowButtons>
      </TitleBar>

      <TabRow>
        <MenuButton>MENU</MenuButton>
        {tabs.map(([t, w]) => <RibbonTab key={t} $w={w} $on={t === "MODEL"}>{t}</RibbonTab>)}
      </TabRow>

      <Ribbon>
        <Group $w={229}>
          <GroupBody $pad={7}><Bigs items={[["extrudeSolid", "Extrude"], ["revolveSolid", "Revolve"], ["loftSolid", "Loft"], ["sweepSolid", "Sweep"], ["solidPrimitive", "Solid\nPrimitive"]]} /></GroupBody>
          <GroupLabel>Create Solid</GroupLabel>
        </Group>
        <Group $w={228}>
          <GroupBody $pad={6}><Bigs items={[["extrudeSurf", "Extrude"], ["revolveSurf", "Revolve"], ["loftSurf", "Loft"], ["sweepSurf", "Sweep"], ["surfacePrimitive", "Surface\nPrimitive"]]} /></GroupBody>
          <GroupLabel>Create Surface</GroupLabel>
        </Group>
        <Group $w={258}>
          <GroupBody $pad={5}>
            <Bigs items={[["meshFit", "Mesh\nFit"], ["loftWiz", "Loft\nWizard", 41], ["sweepWiz", "Sweep\nWizard", 45]]} />
            <Smalls w={110} items={[["extrusionWiz", "Extrusion Wizard"], ["revolutionWiz", "Revolution Wizard"], ["pipeWiz", "Pipe Wizard"]]} />
          </GroupBody>
          <GroupLabel>Wizard</GroupLabel>
        </Group>
        <Group $w={126}>
          <GroupBody $pad={9}><Smalls w={112} items={[["helix", "Helix Curve"], ["spiral", "Spiral Curve"], ["poly", "3D Polyline Curve"]]} /></GroupBody>
          <GroupLabel>Curve</GroupLabel>
        </Group>
        <Group $w={121}>
          <GroupBody $pad={6}>
            <Bigs items={[["plane", "Plane"], ["vector", "Vector", 43]]} />
            <Smalls w={20} items={[["point", ""], ["polygonCenter", ""], ["axes", ""]]} />
          </GroupBody>
          <GroupLabel>Reference Geometry</GroupLabel>
        </Group>
        <Group $w={433}>
          <GroupBody $pad={5}>
            <Bigs items={[["cut", "Cut"], ["boolean", "Boolean", 51]]} />
            <Smalls w={69} items={[["fillet", "Fillet"], ["chamfer", "Chamfer"], ["draft", "Draft"]]} />
            <Smalls w={105} items={[["shell", "Shell"], ["thicken", "Thicken Surface", true], ["emboss", "Emboss"]]} />
            <Rule />
            <Bigs items={[["trim", "Trim\nSurface", 43, true], ["extend", "Extend\nSurface", 43, true], ["sew", "Sew", 43, true]]} />
            <Smalls w={20} items={[["surfA", ""], ["surfB", "", true], ["surfC", "", true]]} />
          </GroupBody>
          <GroupLabel>Edit</GroupLabel>
        </Group>
        <Group $w={95}>
          <GroupBody $pad={6}><Bigs items={[["fillFace", "Fill\nFace"], ["refit", "Refit"]]} /></GroupBody>
          <GroupLabel>Fit</GroupLabel>
        </Group>
        <Group $w={79}>
          <GroupBody $pad={6}><Bigs items={[["mirror", "Mirror"]]} /><Smalls w={20} items={[["pat1", ""], ["pat2", ""], ["pat3", ""]]} /></GroupBody>
          <GroupLabel>Pattern</GroupLabel>
        </Group>
        <Group $w={294}>
          <GroupBody $pad={8}>
            <Smalls w={107} items={[["transform", "Transform Body"], ["duplicate", "Duplicate Body"], ["deleteBody", "Delete Body"]]} />
            <Smalls w={92} items={[["moveFace", "Move Face"], ["deleteFace", "Delete Face"], ["replaceFace", "Replace Face"]]} />
            <Smalls w={84} items={[["splitFace", "Split Face"], ["findDefect", "Find Defect"]]} />
          </GroupBody>
          <GroupLabel>Body/Face</GroupLabel>
        </Group>
      </Ribbon>

      <Main>
        <SidePanel>
          <PanelHead>
            <span>Tree</span>
            <Glyph aria-label="Pin"><svg width="8" height="10" viewBox="0 0 8 10" fill="none" stroke="#fff"><path d="M2 .5H6V5.500H2ZM5.500 .5V5.500M0 5.500H8M4 6V10" /></svg></Glyph>
            <Glyph aria-label="Close panel"><svg width="9" height="9" viewBox="0 0 9 9"><path d="M1 1L8 8M8 1L1 8" stroke="#fff" strokeWidth="1.800" /></svg></Glyph>
          </PanelHead>
          <PanelTabs>
            <PanelTab $w={49} $on>
              <svg width="14" height="14" viewBox="0 0 15 14" fill="none" stroke="#777"><path d="M.5 2.500H6.500V7.500H.5Z" fill="#eee" /><path d="M12 1.500H9V12.500H12M7 7H12" /><path d="M12 0H15V3H12Z" fill="#2456a6" stroke="none" /><path d="M12 5.500H15V8.500H12Z" fill="#4a9a18" stroke="none" /><path d="M12 11H15V14H12Z" fill="#d06010" stroke="none" /></svg>
              Tree
            </PanelTab>
            <PanelTab $w={51}>
              <svg width="12" height="15" viewBox="1 0 12 15" fill="none"><path d="M3.500 5C3 1 11 1 10.500 5C10 7.500 7 7 7 10M7 12V14" stroke="#4d9a5c" strokeWidth="3.400" /><path d="M3.500 5C3 1 11 1 10.500 5C10 7.500 7 7 7 10M7 12.500V13.500" stroke="#e8f4ea" strokeWidth="1.400" /></svg>
              Help
            </PanelTab>
            <PanelTab $w={90}>
              <svg width="14" height="13" viewBox="0 0 14 13" stroke="#6d6d6d"><path d="M.5 2.500H9V.5H13.500V12.500H.5Z" fill="#dadada" /><circle cx="3.500" cy="5.500" r="1.800" fill="#fff" /><path d="M8.500 5H11.500V9.500H8.500Z" fill="#6a9ae0" /></svg>
              Viewpoint
            </PanelTab>
          </PanelTabs>
          <SectionHead>Feature</SectionHead>
          <ListArea $grow={371}>
            <List>
              {features.map(([icon, text, top, exp]) => (
                <Row key={text} $indent={top ? 21 : 4}>
                  {!top && <><ExpandCell>{exp && <Expand name={text} />}</ExpandCell><StateCell><Bullet /></StateCell></>}
                  <SmallIcon name={icon} />
                  <Text>{text}</Text>
                </Row>
              ))}
            </List>
            <VScroll pct={28} />
          </ListArea>
          <SectionHead>Model</SectionHead>
          <ListArea $grow={354}>
            <List>
              <Row $indent={3} $bold><RootSquare /><Text>R5O9UKBC6HY3</Text></Row>
              {nodes.map((n) => (
                <Row key={n.text} $indent={n.level ? (n.state ? 23 : 26) : 4} $bold={n.bold}>
                  <ExpandCell>{n.exp && <Expand name={n.text} open={n.exp === "-"} />}</ExpandCell>
                  <StateCell>{n.state && <EyeCheck name={n.text} on={n.state === "on"} />}</StateCell>
                  {n.dot ? <ColorDot $c={n.dot} /> : <SmallIcon name={n.icon!} />}
                  <Text $focus={n.focus}>{n.text}</Text>
                </Row>
              ))}
            </List>
            <VScroll pct={36} />
          </ListArea>
          <BottomScroll>
            <Scroll $row>
              <ScrollEnd aria-label="Scroll left"><Arrow dir="l" /></ScrollEnd>
              <Thumb $pct={84} />
              <Spacer />
              <ScrollEnd aria-label="Scroll right"><Arrow dir="r" /></ScrollEnd>
            </Scroll>
          </BottomScroll>
        </SidePanel>
        <Splitter />
        <Stage>
          <Canvas>
            <Model />
            <FloatBar>
              {floatTools.map((t) => (
                <React.Fragment key={t.name}>
                  <ToolButton $w={t.w} $on={t.on} aria-label={t.name}>{t.d === "arrow" ? <Drop /> : <T c={t.c}>{t.d}</T>}</ToolButton>
                  {t.rule && <ToolRule />}
                </React.Fragment>
              ))}
            </FloatBar>
          </Canvas>
          <ViewTabs>
            <Glyph aria-label="Previous view"><svg width="7" height="9" viewBox="0 0 7 9"><path d="M5 1V8L1.500 4.500Z" fill="none" stroke="#666" /></svg></Glyph>
            <ViewTab>Model View</ViewTab>
            <Spacer />
            <Glyph aria-label="Next view"><svg width="9" height="9" viewBox="0 0 9 9"><path d="M3 1V8L6.500 4.500Z" fill="none" stroke="#666" /></svg></Glyph>
            <Glyph aria-label="Close view"><svg width="9" height="9" viewBox="0 0 9 9"><path d="M1 1L8 8M8 1L1 8" stroke="#777" strokeWidth="1.300" /></svg></Glyph>
            <BoxButton aria-label="Split view"><svg width="10" height="10" viewBox="0 0 10 10"><path d="M0 3.500H5V0L10 5L5 10V6.500H0Z" fill="#222" /></svg></BoxButton>
            <BoxButton aria-label="View list"><svg width="10" height="10" viewBox="0 0 10 10"><path d="M1 3H9L5 8Z" fill="#222" /></svg></BoxButton>
          </ViewTabs>
        </Stage>
        <Dock>
          <DockTab>
            <svg width="14" height="14" viewBox="0 0 14 14" fill="none" stroke="#666"><path d="M.5 2H9.500V12H.5Z" fill="#a9c6e8" /><path d="M3 .5H7V3H3Z" fill="#eee" /><path d="M5 5H13.500V13.500H5ZM7 8H12M7 10.500H11" fill="#f2f2f2" /></svg>
            Properties
          </DockTab>
          <DockTab>
            <svg width="14" height="13" viewBox="0 0 14 13" stroke="#777"><path d="M1 .5H13V9.500H1Z" fill="#eee" /><path d="M3 2.500H11V7.500H3Z" fill="#3e68b8" /><circle cx="7" cy="5" r="1.500" fill="#e8dc9a" stroke="none" /><path d="M0 12.500L1 10.500H13L14 12.500Z" fill="#ddd" /></svg>
            Display
          </DockTab>
          <DockTab>
            <svg width="14" height="13" viewBox="0 0 14 13"><path d="M1 12V5H3V12Z" fill="#d42020" /><path d="M3 12V7H5V12Z" fill="#f08a1c" /><path d="M5 12V4L8 2V12Z" fill="#f2e02c" /><path d="M8 12V1L11 2V12Z" fill="#4aa82a" /><path d="M11 12V3L13 5V12Z" fill="#1d7474" /><path d="M.5 0V12.500H14" fill="none" stroke="#111" /></svg>
            Accuracy Analyzer(TM)
          </DockTab>
        </Dock>
      </Main>

      <StatusBar>
        <Grip />
        <ToolButton $w={27} aria-label="Picking"><T><path d="M4 0V15M14 5V18M0 4H18M4 14H18" strokeWidth="1.400" /><path d="M6 6L12 12M12 8V12H8" stroke={RED} strokeWidth="1.800" /></T></ToolButton>
        <SelectWrap><Combo aria-label="Selection mode" disabled><option>Auto</option></Combo><Arrow dir="d" c="#b4b4b4" /></SelectWrap>
        <SelectWrap><Combo aria-label="Unit mode" $edit disabled><option>Auto</option></Combo><Arrow dir="d" c="#b4b4b4" /></SelectWrap>
        <Grip />
        <Tools items={showTools} />
        <ToolButton $w={13} aria-label="More display"><Drop /></ToolButton>
        <Grip />
        <Tools items={selectTools} />
        <ToolRule />
        <ToolButton $w={26} aria-label="Copy"><T c={OFF}><path d="M2 2H8V16H2ZM6 4H12L16 8V17H6Z" fill="#eee" /></T></ToolButton>
        <ToolButton $w={13} aria-label="More selection"><Drop /></ToolButton>
        <Grip />
        <Tools items={measureTools} />
        <ToolButton $w={26} aria-label="Accuracy"><T><path d="M5 1H12L16 6L14 14L7 17L1 10Z" fill="url(#gRain)" /></T></ToolButton>
        <ToolButton $w={12} aria-label="More measurement"><Drop /></ToolButton>
      </StatusBar>
    </Frame>
  );
}
